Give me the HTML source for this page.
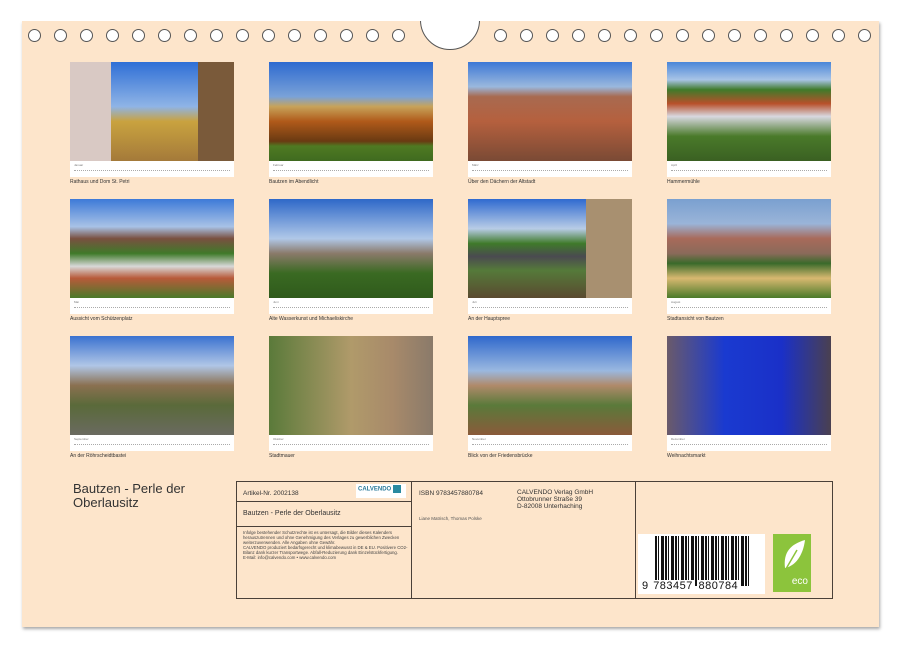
<!DOCTYPE html>
<html><head><meta charset="utf-8"><style>
*{margin:0;padding:0;box-sizing:border-box}
body{width:899px;height:648px;background:#fff;position:relative;overflow:hidden;font-family:"Liberation Sans",sans-serif;color:#333}
.sheet{position:absolute;left:22px;top:21px;width:857px;height:606px;background:#fde5cb;box-shadow:1px 2px 3px rgba(0,0,0,.35)}
.hole{position:absolute;top:29px;width:13px;height:13px;border:1.5px solid #555;border-radius:50%;background:#fff}
.notch{position:absolute;left:420px;top:-10px;width:60px;height:60px;border:1.5px solid #555;border-radius:50%;background:#fff;clip-path:inset(10px 0 0 0)}
.cover{position:absolute;left:0;top:0;width:899px;height:21px;background:#fff}
.ph{position:absolute;width:164px;height:99px}
.cal{position:absolute;width:164px;height:16px;background:#fff;font-size:3px;color:#777;padding:2px 4px}
.cal i{display:block;height:2px;margin-top:3px;border-top:1px dotted #aaa}
.cap{position:absolute;font-size:5px;color:#333}
.box{position:absolute;border:1.5px solid #4a4038}
</style></head><body>
<div class="sheet"></div>
<div class="notch"></div>
<div class="cover"></div>
<div class="hole" style="left:28px"></div><div class="hole" style="left:54px"></div><div class="hole" style="left:80px"></div><div class="hole" style="left:106px"></div><div class="hole" style="left:132px"></div><div class="hole" style="left:158px"></div><div class="hole" style="left:184px"></div><div class="hole" style="left:210px"></div><div class="hole" style="left:236px"></div><div class="hole" style="left:262px"></div><div class="hole" style="left:288px"></div><div class="hole" style="left:314px"></div><div class="hole" style="left:340px"></div><div class="hole" style="left:366px"></div><div class="hole" style="left:392px"></div>
<div class="hole" style="left:494px"></div><div class="hole" style="left:520px"></div><div class="hole" style="left:546px"></div><div class="hole" style="left:572px"></div><div class="hole" style="left:598px"></div><div class="hole" style="left:624px"></div><div class="hole" style="left:650px"></div><div class="hole" style="left:676px"></div><div class="hole" style="left:702px"></div><div class="hole" style="left:728px"></div><div class="hole" style="left:754px"></div><div class="hole" style="left:780px"></div><div class="hole" style="left:806px"></div><div class="hole" style="left:832px"></div><div class="hole" style="left:858px"></div>

<!-- row 1 -->
<div class="ph" style="left:70px;top:62px;background:linear-gradient(90deg,#d9c9c4 0 25%,transparent 25% 78%,#7a5a3a 78%),linear-gradient(#2f6fd6 0,#8fb4e6 45%,#c9a23f 60%,#a47a3a 100%)"></div>
<div class="ph" style="left:269px;top:62px;background:linear-gradient(#2e6ad0 0,#7aa2d8 35%,#c7a35a 45%,#b05a1a 60%,#6a3a12 80%,#4f7a22 85%,#3f6a1f 100%)"></div>
<div class="ph" style="left:468px;top:62px;background:linear-gradient(#3d78d6 0,#9ab8dd 25%,#a86a50 35%,#b5603e 60%,#7a4a35 100%)"></div>
<div class="ph" style="left:667px;top:62px;background:linear-gradient(#4a86d8 0,#a8c4e6 18%,#3f7a2a 28%,#b8502a 42%,#d8d8e0 55%,#4a7a2a 75%,#3a6022 100%)"></div>
<!-- row 2 -->
<div class="ph" style="left:70px;top:199px;background:linear-gradient(#3d7ad8 0,#a8c2e6 28%,#7a5040 40%,#3f7a2a 55%,#d8d8d8 68%,#b85a3a 80%,#4a7a2a 100%)"></div>
<div class="ph" style="left:269px;top:199px;background:linear-gradient(#2e68c8 0,#b0c8e8 40%,#8a7a6a 55%,#3a6a22 75%,#2f5a1c 100%)"></div>
<div class="ph" style="left:468px;top:199px;background:linear-gradient(90deg,transparent 0 72%,#a89070 72%),linear-gradient(#2f6ad0 0,#b8cce6 30%,#3f7a2a 45%,#4a4a50 58%,#557a3a 72%,#5a4a30 100%)"></div>
<div class="ph" style="left:667px;top:199px;background:linear-gradient(#7aa0d0 0,#9ab4d8 25%,#a86a5a 40%,#8a6a5a 55%,#3a6a2a 65%,#d8b870 80%,#4a7a2a 100%)"></div>
<!-- row 3 -->
<div class="ph" style="left:70px;top:336px;background:linear-gradient(#3a72d0 0,#b0c6e6 30%,#8a7050 50%,#5a6a3a 70%,#6a6a60 100%)"></div>
<div class="ph" style="left:269px;top:336px;background:linear-gradient(90deg,#5a7a3a 0,#b09a6a 50%,#a88a6a 75%,#8a7a6a 100%)"></div>
<div class="ph" style="left:468px;top:336px;background:linear-gradient(#2f68cc 0,#9ab8e0 35%,#b08a6a 50%,#5a7a3a 70%,#8a5a3a 100%)"></div>
<div class="ph" style="left:667px;top:336px;background:linear-gradient(90deg,#6a5a6a 0,#1a3ad0 35%,#1a30c8 70%,#4a4050 100%)"></div>

<div class="cal" style="left:70px;top:161px">Januar<i></i></div><div class="cal" style="left:269px;top:161px">Februar<i></i></div><div class="cal" style="left:468px;top:161px">März<i></i></div><div class="cal" style="left:667px;top:161px">April<i></i></div>
<div class="cal" style="left:70px;top:298px">Mai<i></i></div><div class="cal" style="left:269px;top:298px">Juni<i></i></div><div class="cal" style="left:468px;top:298px">Juli<i></i></div><div class="cal" style="left:667px;top:298px">August<i></i></div>
<div class="cal" style="left:70px;top:435px">September<i></i></div><div class="cal" style="left:269px;top:435px">Oktober<i></i></div><div class="cal" style="left:468px;top:435px">November<i></i></div><div class="cal" style="left:667px;top:435px">Dezember<i></i></div>

<div class="cap" style="left:70px;top:179px">Rathaus und Dom St. Petri</div>
<div class="cap" style="left:269px;top:179px">Bautzen im Abendlicht</div>
<div class="cap" style="left:468px;top:179px">Über den Dächern der Altstadt</div>
<div class="cap" style="left:667px;top:179px">Hammermühle</div>
<div class="cap" style="left:70px;top:316px">Aussicht vom Schützenplatz</div>
<div class="cap" style="left:269px;top:316px">Alte Wasserkunst und Michaeliskirche</div>
<div class="cap" style="left:468px;top:316px">An der Hauptspree</div>
<div class="cap" style="left:667px;top:316px">Stadtansicht von Bautzen</div>
<div class="cap" style="left:70px;top:453px">An der Röhrscheidtbastei</div>
<div class="cap" style="left:269px;top:453px">Stadtmauer</div>
<div class="cap" style="left:468px;top:453px">Blick von der Friedensbrücke</div>
<div class="cap" style="left:667px;top:453px">Weihnachtsmarkt</div>

<div style="position:absolute;left:73px;top:482px;font-size:13px;line-height:14px;color:#333">Bautzen - Perle der<br>Oberlausitz</div>

<div class="box" style="left:236px;top:481px;width:597px;height:118px"></div>
<div class="box" style="left:411px;top:481px;width:225px;height:118px;border-top:none;border-bottom:none"></div>
<div style="position:absolute;left:236px;top:501px;width:176px;border-top:1.5px solid #4a4038"></div>
<div style="position:absolute;left:236px;top:526px;width:176px;border-top:1.5px solid #4a4038"></div>
<div style="position:absolute;left:243px;top:490px;font-size:6.5px">Artikel-Nr. 2002138</div>
<div style="position:absolute;left:356px;top:484px;width:50px;height:14px;background:#fff;font-size:6px;color:#2a7a9a;padding:1px 2px;font-weight:bold">CALVENDO<span style="display:inline-block;width:8px;height:8px;background:#2a8aa0;margin-left:2px;vertical-align:middle"></span></div>
<div style="position:absolute;left:243px;top:510px;font-size:7px">Bautzen - Perle der Oberlausitz</div>
<div style="position:absolute;left:243px;top:530px;width:168px;font-size:4.3px;line-height:5px;color:#444">Infolge bestehender Schutzrechte ist es untersagt, die Bilder dieses Kalenders herauszutrennen und ohne Genehmigung des Verlages zu gewerblichen Zwecken weiterzuverwenden. Alle Angaben ohne Gewähr.<br>CALVENDO produziert bedarfsgerecht und klimabewusst in DE &amp; EU. Positivere CO2-Bilanz dank kurzer Transportwege. Abfall-Reduzierung dank Einzelstückfertigung.<br>E-Mail: info@calvendo.com • www.calvendo.com</div>
<div style="position:absolute;left:419px;top:490px;font-size:6.5px">ISBN 9783457880784</div>
<div style="position:absolute;left:517px;top:489px;font-size:6.5px;line-height:7px">CALVENDO Verlag GmbH<br>Ottobrunner Straße 39<br>D-82008 Unterhaching</div>
<div style="position:absolute;left:419px;top:516px;font-size:4.5px;color:#555">Liane Matrisch, Thomas Polske</div>

<div style="position:absolute;left:638px;top:534px;width:127px;height:60px;background:#fff"></div>
<div style="position:absolute;left:655px;top:536px;width:96px;height:50px;background:repeating-linear-gradient(90deg,#111 0 2px,#fff 2px 3px,#111 3px 4px,#fff 4px 6px,#111 6px 9px,#fff 9px 10px)"></div>
<div style="position:absolute;left:642px;top:580px;width:120px;font-size:11px;letter-spacing:.5px;color:#111;background:transparent"><span style="background:#fff">9</span> <span style="background:#fff;padding:0 1px">783457</span> <span style="background:#fff;padding:0 1px">880784</span></div>
<div style="position:absolute;left:773px;top:534px;width:38px;height:58px;background:#8cc43c;color:#fff;font-size:10px;text-align:right;padding:42px 3px 0 0">eco
<svg style="position:absolute;left:6px;top:4px" width="28" height="38" viewBox="0 0 28 38"><path d="M26 2C12 6 4 14 6 30 16 28 24 18 26 2Z" fill="#fff"/><path d="M4 36L18 12" stroke="#8cc43c" stroke-width="1.5"/></svg></div>
</body></html>
